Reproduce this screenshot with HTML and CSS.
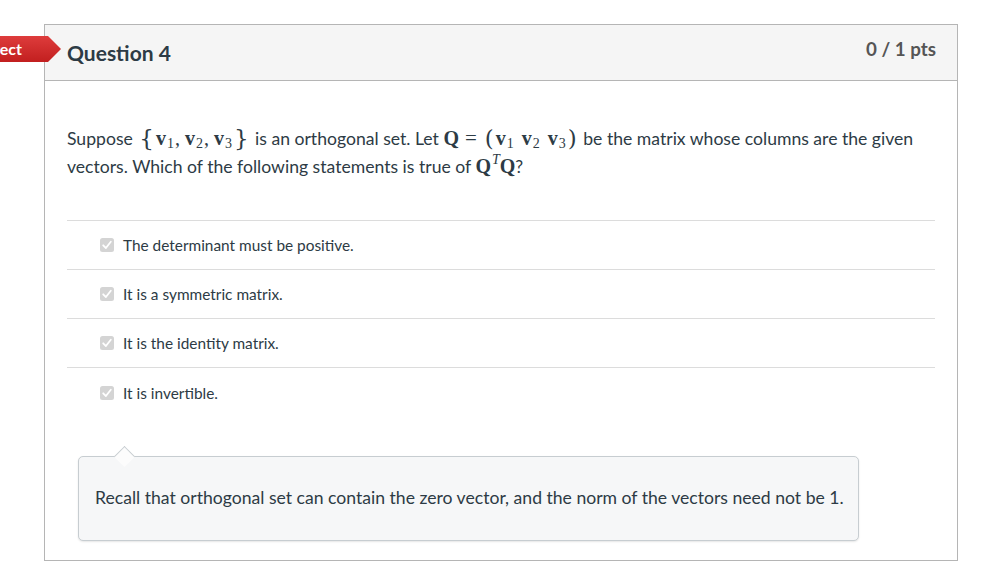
FILE: index.html
```html
<!DOCTYPE html>
<html>
<head>
<meta charset="utf-8">
<link rel="stylesheet" href="styles.css">
</head>
<body>
<div class="page">
  <div class="card">
    <div class="tag">Incorrect</div>
    <div class="header">
      <div class="title">Question 4</div>
      <div class="pts">0 / 1 pts</div>
    </div>
    <div class="content">
      <p class="question">Suppose <span class="m"><span class="br">{</span><b>v</b><sub>1</sub><span class="cm">,</span><b>v</b><sub>2</sub><span class="cm">,</span><b>v</b><sub>3</sub><span class="br">}</span></span> is an orthogonal set. Let <span class="m"><b>Q</b><span class="eq">=</span><span class="br">(</span><b>v</b><sub>1</sub><span class="sp"></span><b>v</b><sub>2</sub><span class="sp"></span><b>v</b><sub>3</sub><span class="br">)</span></span> be the matrix whose columns are the given vectors. Which of the following statements is true of <span class="m"><b>Q</b><sup>T</sup><b>Q</b></span>?</p>
      <div class="answers">
        <div class="answer"><span class="cb"><svg viewBox="0 0 14 14" width="14" height="14"><rect x="0" y="0" width="14" height="14" rx="2.5" fill="#d4d4d4"/><path d="M3.2 7.3 L5.9 10 L10.8 3.8" fill="none" stroke="#fff" stroke-width="1.8" stroke-linecap="round" stroke-linejoin="round"/></svg></span>The determinant must be positive.</div>
        <div class="answer"><span class="cb"><svg viewBox="0 0 14 14" width="14" height="14"><rect x="0" y="0" width="14" height="14" rx="2.5" fill="#d4d4d4"/><path d="M3.2 7.3 L5.9 10 L10.8 3.8" fill="none" stroke="#fff" stroke-width="1.8" stroke-linecap="round" stroke-linejoin="round"/></svg></span>It is a symmetric matrix.</div>
        <div class="answer"><span class="cb"><svg viewBox="0 0 14 14" width="14" height="14"><rect x="0" y="0" width="14" height="14" rx="2.5" fill="#d4d4d4"/><path d="M3.2 7.3 L5.9 10 L10.8 3.8" fill="none" stroke="#fff" stroke-width="1.8" stroke-linecap="round" stroke-linejoin="round"/></svg></span>It is the identity matrix.</div>
        <div class="answer last"><span class="cb"><svg viewBox="0 0 14 14" width="14" height="14"><rect x="0" y="0" width="14" height="14" rx="2.5" fill="#d4d4d4"/><path d="M3.2 7.3 L5.9 10 L10.8 3.8" fill="none" stroke="#fff" stroke-width="1.8" stroke-linecap="round" stroke-linejoin="round"/></svg></span>It is invertible.</div>
      </div>
      <div class="hint">Recall that orthogonal set can contain the zero vector, and the norm of the vectors need not be 1.</div>
    </div>
  </div>
</div>
</body>
</html>
```

FILE: styles.css
```css
html, body {
  margin: 0;
  padding: 0;
  background: #fff;
}
body {
  font-family: Lato, "Noto Sans", sans-serif;
  color: #2d3b45;
  width: 996px;
  height: 579px;
  overflow: hidden;
}
.page {
  padding: 24px 0 0 44px;
}
.card {
  position: relative;
  width: 912px;
  border: 1px solid #b5b5b5;
}
.tag {
  position: absolute;
  left: -97px;
  top: 11px;
  height: 26px;
  width: 113px;
  padding-right: 39px;
  box-sizing: border-box;
  background: linear-gradient(#de3c3c, #c21f1f);
  color: #fff;
  font-weight: 700;
  font-size: 16px;
  line-height: 26px;
  text-align: right;
  clip-path: polygon(0 0, 100px 0, 100% 50%, 100px 100%, 0 100%);
}
.header {
  height: 55px;
  background: #f5f5f5;
  border-bottom: 1px solid #b5b5b5;
  display: flex;
  justify-content: space-between;
  align-items: flex-start;
  padding: 0 21px 0 22px;
}
.title {
  font-weight: 700;
  font-size: 21px;
  margin-top: 15px;
  line-height: 26px;
}
.pts {
  font-weight: 700;
  font-size: 18.8px;
  color: #555;
  margin-top: 12px;
  line-height: 24px;
}
.content {
  padding: 44px 22px 19px 22px;
}
.question {
  margin: 0;
  font-size: 17.6px;
  line-height: 28px;
}
.m {
  font-family: "Liberation Serif", "DejaVu Serif", serif;
  font-size: 20px;
  line-height: 1;
  white-space: nowrap;
}
.m b {
  font-weight: 700;
}
.m sub {
  font-size: 14px;
  vertical-align: -3px;
  line-height: 1;
  margin-left: 1px;
}
.m sup {
  font-size: 14px;
  font-style: italic;
  vertical-align: 9px;
  line-height: 1;
  margin-left: 1px;
}
.cm {
  margin-right: 5px;
  margin-left: 1px;
}
.sp {
  display: inline-block;
  width: 8px;
}
.br {
  font-size: 23px;
  font-family: "DejaVu Serif", serif;
  vertical-align: -1px;
  line-height: 1;
  margin: 0 2px;
}
.eq {
  font-size: 21px;
  padding: 0 6px;
}
.answers {
  margin-top: 39px;
  border-top: 1px solid #dcdcdc;
}
.answer {
  height: 49px;
  border-bottom: 1px solid #dcdcdc;
  display: flex;
  align-items: center;
  padding-left: 33px;
  box-sizing: border-box;
  font-size: 15.4px;
  color: #2d3b45;
}
.answer.last {
  border-bottom: none;
}
.cb {
  display: inline-flex;
  width: 14px;
  height: 14px;
  margin-right: 9px;
}
.hint {
  position: relative;
  margin: 39px 76px 0 11px;
  height: 85px;
  box-sizing: border-box;
  border: 1px solid #c7cdd1;
  border-radius: 5px;
  background: #f6f7f8;
  box-shadow: 0 1px 2px rgba(0,0,0,0.1);
  font-size: 17.6px;
  line-height: 22px;
  padding: 30px 8px 0 16px;
  white-space: nowrap;
}
.hint::before {
  content: "";
  position: absolute;
  left: 38px;
  top: -8px;
  width: 14px;
  height: 14px;
  background: #fcfcfc;
  border-left: 1px solid #c7cdd1;
  border-top: 1px solid #c7cdd1;
  transform: rotate(45deg);
}
```
